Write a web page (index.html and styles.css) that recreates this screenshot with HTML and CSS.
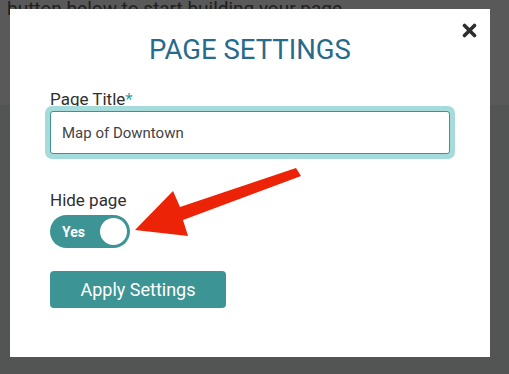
FILE: index.html
```html
<!DOCTYPE html>
<html>
<head>
<meta charset="utf-8">
<link rel="stylesheet" href="styles.css">
</head>
<body>
<div class="page">
  <p class="intro">button below to start building your page.</p>
  <div class="lower"></div>
</div>
<div class="modal">
  <button class="close" aria-label="Close">
    <svg width="15" height="15" viewBox="0 0 15 15"><path d="M2.5 2.5 L12.5 12.5 M12.5 2.5 L2.5 12.5" stroke="#2d2d2d" stroke-width="3.6" stroke-linecap="round"/></svg>
  </button>
  <h2 class="title">PAGE SETTINGS</h2>
  <label class="label">Page Title<span class="req">*</span></label>
  <div class="ring"><div class="input">Map of Downtown</div></div>
  <div class="label hide">Hide page</div>
  <div class="toggle"><span class="yes">Yes</span><span class="knob"></span></div>
  <button class="apply">Apply Settings</button>
  <svg class="arrow" width="200" height="90" viewBox="0 0 200 90">
    <polygon fill="#ec2306" points="171,-2 176,6 58,50 63,66 10,60 48,21 55,37"/>
  </svg>
</div>
</body>
</html>
```
FILE: styles.css
```css
html, body {
  margin: 0;
  padding: 0;
}
body {
  width: 509px;
  height: 374px;
  overflow: hidden;
  background: #535554;
  font-family: Roboto, "Liberation Sans", sans-serif;
  position: relative;
}
.page {
  display: flex;
  flex-direction: column;
  height: 100%;
}
.intro {
  margin: 0;
  height: 105px;
  background: #595959;
  color: #1e1e1e;
  font-size: 19px;
  line-height: 18px;
  padding: 0 0 0 7px;
  box-sizing: border-box;
}
.lower {
  flex: 1;
  background: #535554;
}
.modal {
  position: absolute;
  left: 10px;
  top: 9px;
  width: 480px;
  height: 348px;
  background: #fff;
  box-sizing: border-box;
  padding: 25px 40px 0 40px;
  display: flex;
  flex-direction: column;
  align-items: flex-start;
}
.close {
  position: absolute;
  right: 13px;
  top: 14px;
  border: 0;
  padding: 0;
  background: none;
  width: 15px;
  height: 15px;
  display: flex;
}
.title {
  align-self: stretch;
  text-align: center;
  margin: 0;
  font-weight: 400;
  font-size: 27.5px;
  line-height: 32px;
  color: #276b8c;
}
.label {
  font-size: 17px;
  line-height: 20px;
  color: #2f2f2f;
  margin-top: 23px;
}
.req {
  color: #3a9b9b;
}
.ring {
  align-self: stretch;
  margin: -3px -5px 0 -5px;
  padding: 5px;
  border-radius: 7px;
  background: #a6dbdb;
}
.input {
  background: #fff;
  border: 1px solid #3e9292;
  border-radius: 3px;
  height: 43px;
  box-sizing: border-box;
  padding: 0 11px;
  display: flex;
  align-items: center;
  font-size: 15px;
  color: #444;
}
.hide {
  margin-top: 31px;
}
.toggle {
  margin-top: 5px;
  width: 80px;
  height: 33px;
  border-radius: 17px;
  background: #3d9494;
  display: flex;
  align-items: center;
  justify-content: space-between;
  padding: 0 3px 0 12px;
  box-sizing: border-box;
}
.yes {
  color: #fff;
  font-weight: 700;
  font-size: 14px;
}
.knob {
  width: 27px;
  height: 27px;
  border-radius: 50%;
  background: #fff;
}
.apply {
  margin-top: 23px;
  width: 176px;
  height: 37px;
  border: 0;
  border-radius: 4px;
  background: #3d9494;
  color: #fff;
  font-family: Roboto, "Liberation Sans", sans-serif;
  font-size: 18px;
  padding: 0;
}
.arrow {
  position: absolute;
  left: 115px;
  top: 161px;
  overflow: visible;
}
```
